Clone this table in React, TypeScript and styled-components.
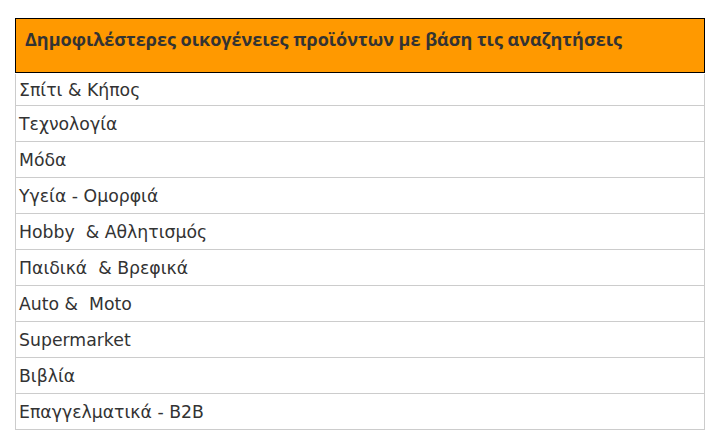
import React from "react";
import styled, { createGlobalStyle } from "styled-components";

const Global = createGlobalStyle`
  html, body { margin: 0; padding: 0; background: #ffffff; }
`;

const Page = styled.div`
  padding: 18px 15px 0 15px;
`;

const Table = styled.div`
  width: 690px;
  display: flex;
  flex-direction: column;
`;

const Header = styled.div`
  height: 53px;
  box-sizing: content-box;
  border: 1px solid #000000;
  background: #ff9900;
  padding: 0 9px;
  display: flex;
  align-items: flex-start;
`;

const HeaderText = styled.h2`
  margin: 8px 0 0 0;
  font-family: "Open Sans", "DejaVu Sans", sans-serif;
  font-weight: 700;
  font-size: 18px;
  line-height: 24px;
  color: #333333;
`;

const Row = styled.div<{ $first?: boolean }>`
  box-sizing: border-box;
  height: ${(p) => (p.$first ? 32 : 36)}px;
  margin-top: ${(p) => (p.$first ? 1 : 0)}px;
  border-left: 1px solid #cccccc;
  border-right: 1px solid #cccccc;
  border-bottom: 1px solid #cccccc;
  display: flex;
  align-items: center;
  padding: 1px 3px 0 3px;
  font-family: "DejaVu Sans", sans-serif;
  font-size: 17.3px;
  color: #333333;
  white-space: pre;
`;

const items = [
  "Σπίτι & Κήπος",
  "Τεχνολογία",
  "Μόδα",
  "Υγεία - Ομορφιά",
  "Hobby  & Αθλητισμός",
  "Παιδικά  & Βρεφικά",
  "Auto &  Moto",
  "Supermarket",
  "Βιβλία",
  "Επαγγελματικά - B2B",
];

export default function App() {
  return (
    <>
      <Global />
      <Page>
        <Table>
          <Header>
            <HeaderText>Δημοφιλέστερες οικογένειες προϊόντων με βάση τις αναζητήσεις</HeaderText>
          </Header>
          {items.map((t, i) => (
            <Row key={i} $first={i === 0}>
              {t}
            </Row>
          ))}
        </Table>
      </Page>
    </>
  );
}
